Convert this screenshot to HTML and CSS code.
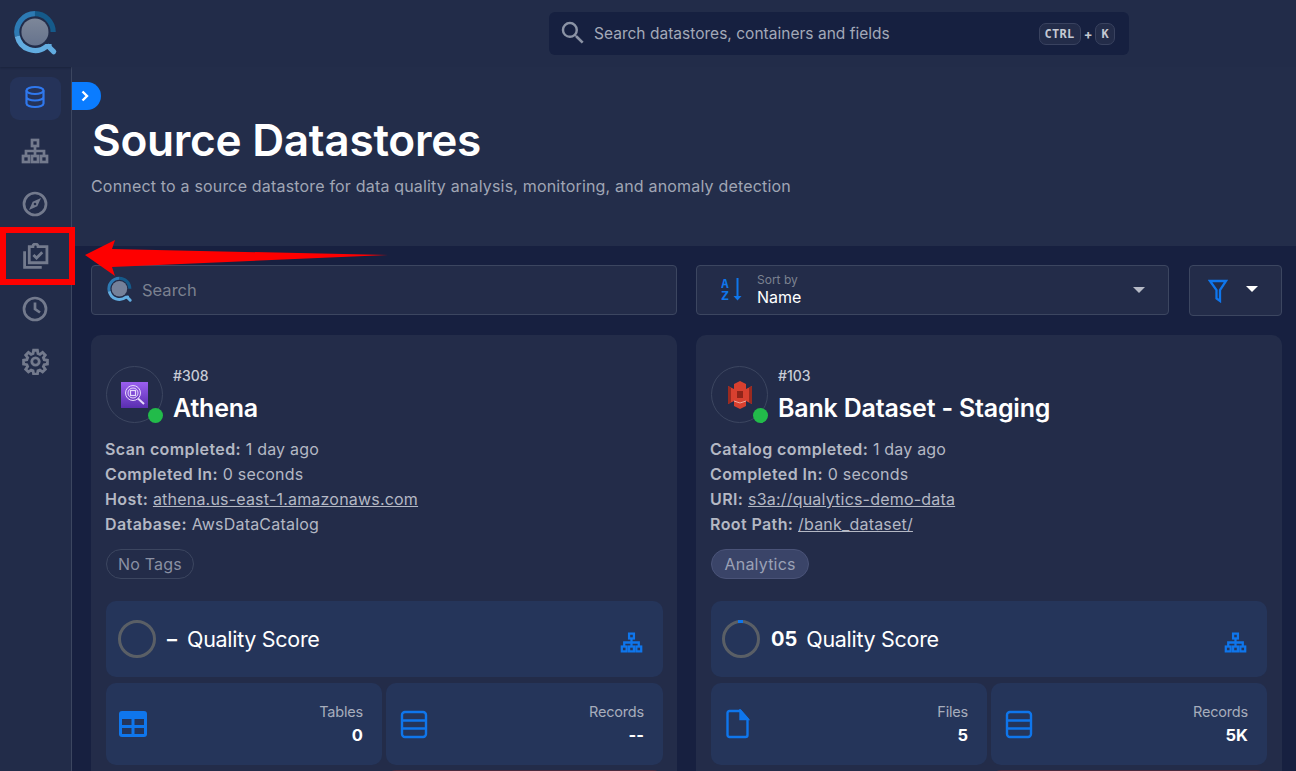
FILE: index.html
```html
<!DOCTYPE html>
<html lang="en">
<head>
    <meta charset="UTF-8">
    <meta name="viewport" content="width=device-width, initial-scale=1.0">
    <title>Source Datastores</title>
    <link rel="stylesheet" href="styles.css">
</head>
<body>
    <header class="topbar">
        <div class="logo-cell">
            <svg width="48" height="52" viewBox="0 0 46 50">
                <defs>
                    <linearGradient id="lens" x1="0" y1="0" x2="0" y2="1">
                        <stop offset="0" stop-color="#7d8799"/>
                        <stop offset="1" stop-color="#66738d"/>
                    </linearGradient>
                </defs>
                <circle cx="22" cy="23" r="13" fill="url(#lens)"/>
                <path d="M22 5.500A17.500 17.500 0 0 1 39.500 23" fill="none" stroke="#155a8a" stroke-width="5"/>
                <path d="M22 5.500A17.500 17.500 0 0 0 5 27" fill="none" stroke="#2d7ab3" stroke-width="5"/>
                <path d="M5 27A17.500 17.500 0 0 0 33 37L38 37" fill="none" stroke="#62ace0" stroke-width="5"/>
                <path d="M35 37L40 42" fill="none" stroke="#62ace0" stroke-width="5" stroke-linecap="round"/>
            </svg>
        </div>
        <div class="global-search">
            <svg class="global-search-icon" width="30" height="30" viewBox="0 0 24 24" fill="#8b93a5"><path d="M15.500 14h-.79l-.28-.27A6.470 6.470 0 0 0 16 9.500 6.500 6.500 0 1 0 9.500 16c1.610 0 3.090-.59 4.230-1.570l.27.28v.79l5 4.990L20.490 19l-4.990-5zm-6 0C7.010 14 5 11.990 5 9.500S7.010 5 9.500 5 14 7.010 14 9.500 11.990 14 9.500 14z"/></svg>
            <span class="global-search-text">Search datastores, containers and fields</span>
            <span class="keys"><kbd>CTRL</kbd><i>+</i><kbd>K</kbd></span>
        </div>
    </header>

    <div class="layout">
        <nav class="sidebar">
            <a class="nav-item active">
                <svg width="24" height="24" viewBox="0 0 24 24" fill="none" stroke="#2f78ee" stroke-width="2.200"><ellipse cx="12" cy="5.500" rx="8.500" ry="3.500"/><path d="M3.500 5.500v13c0 2 3.800 3.500 8.500 3.500s8.500-1.500 8.500-3.500v-13M3.500 12c0 2 3.800 3.500 8.500 3.500s8.500-1.500 8.500-3.500"/></svg>
            </a>
            <a class="nav-item">
                <svg width="28" height="26" viewBox="0 0 28 26" fill="none" stroke="#737a8d" stroke-width="2.700"><rect x="11" y="2" width="6" height="6"/><rect x="2" y="18" width="6" height="6"/><rect x="11" y="18" width="6" height="6"/><rect x="20" y="18" width="6" height="6"/><path d="M14 8v10M5 18v-5h18v5"/></svg>
            </a>
            <a class="nav-item">
                <svg width="26" height="26" viewBox="0 0 26 26" fill="none"><circle cx="13" cy="13" r="11" stroke="#737a8d" stroke-width="2.700"/><path d="M19 7l-3.700 8.300L7 19l3.700-8.300z" fill="#737a8d"/><circle cx="13" cy="13" r="1.300" fill="#222c49"/></svg>
            </a>
            <a class="nav-item">
                <svg width="27" height="27" viewBox="0 0 26 26" fill="none" stroke="#737a8d" stroke-width="2.700"><path d="M2.500 8v15.500H19"/><path d="M7 3.500h3.500a2.500 2.500 0 0 1 5 0H24V19H7z"/><path d="M11 11.500l3 3 5.500-5.500"/></svg>
            </a>
            <a class="nav-item">
                <svg width="26" height="26" viewBox="0 0 26 26" fill="none" stroke="#737a8d" stroke-width="2.700"><circle cx="13" cy="13" r="11"/><path d="M13 6.500V13l5 3.500"/></svg>
            </a>
            <a class="nav-item">
                <svg width="27" height="27" viewBox="0 0 24 24" fill="none" stroke="#737a8d" stroke-width="2.500"><circle cx="12" cy="12" r="3.300"/><path d="M10.300 2h3.400l.5 2.900 1.700.7 2.400-1.700 2.400 2.400-1.700 2.400.7 1.700 2.900.5v3.400l-2.900.5-.7 1.700 1.700 2.400-2.400 2.400-2.400-1.700-1.700.7-.5 2.900h-3.400l-.5-2.900-1.700-.7-2.400 1.700-2.400-2.400 1.700-2.400-.7-1.700-2.900-.5v-3.400l2.900-.5.7-1.700-1.700-2.400 2.400-2.400 2.400 1.700 1.700-.7z"/></svg>
            </a>
        </nav>

        <main class="page">
            <button class="toggle">
                <svg width="12" height="12" viewBox="0 0 12 12" fill="none" stroke="#fff" stroke-width="2.400"><path d="M3.500 1.500L8 6l-4.500 4.500"/></svg>
            </button>
            <section class="page-head">
                <h1>Source Datastores</h1>
                <p>Connect to a source datastore for data quality analysis, monitoring, and anomaly detection</p>
            </section>

            <section class="content">
                <div class="toolbar">
                    <div class="field search-field">
                        <svg width="28" height="30" viewBox="0 0 46 50">
                            <circle cx="22" cy="23" r="13" fill="#75819a"/>
                            <path d="M22 5.500A17.500 17.500 0 0 1 39.500 23" fill="none" stroke="#155a8a" stroke-width="5"/>
                            <path d="M22 5.500A17.500 17.500 0 0 0 5 27" fill="none" stroke="#2d7ab3" stroke-width="5"/>
                            <path d="M5 27A17.500 17.500 0 0 0 33 37L38 37" fill="none" stroke="#62ace0" stroke-width="5"/>
                            <path d="M35 37L40 42" fill="none" stroke="#62ace0" stroke-width="5" stroke-linecap="round"/>
                        </svg>
                        <span>Search</span>
                    </div>
                    <div class="field sort-field">
                        <svg width="24" height="26" viewBox="0 0 24 26">
                            <text x="0" y="10.500" class="az">A</text>
                            <text x="0" y="23" class="az">Z</text>
                            <path d="M16.500 1v21" stroke="#0f76ec" stroke-width="2"/>
                            <path d="M12.500 19h8l-4 4.500z" fill="#0f76ec"/>
                        </svg>
                        <div class="sort-text">
                            <small>Sort by</small>
                            <strong>Name</strong>
                        </div>
                        <span class="caret sort-caret"></span>
                    </div>
                    <div class="field filter-field">
                        <svg width="20" height="24" viewBox="0 0 20 24" fill="none" stroke="#0f76ec" stroke-width="2.300"><path d="M2 2h16l-6 9v11l-3.500-2.500V11z"/></svg>
                        <span class="caret filter-caret"></span>
                    </div>
                </div>

                <div class="cards">
                    <article class="card">
                        <div class="card-head">
                            <div class="avatar">
                                <svg width="27" height="26" viewBox="0 0 27 26">
                                    <defs>
                                        <linearGradient id="athena" x1="0" y1="0" x2="0" y2="1">
                                            <stop offset="0" stop-color="#9a5ff0"/>
                                            <stop offset="1" stop-color="#5a2eb0"/>
                                        </linearGradient>
                                    </defs>
                                    <rect width="27" height="26" fill="url(#athena)"/>
                                    <g fill="none" stroke="#e6d9fb">
                                        <circle cx="12" cy="11" r="7.500" stroke-width="1"/>
                                        <circle cx="12" cy="11" r="5" stroke-width="1"/>
                                        <rect x="9.500" y="8.500" width="5" height="5" stroke-width="1.200"/>
                                        <path d="M17 16.500l6 5.500" stroke-width="2"/>
                                    </g>
                                </svg>
                                <span class="dot"></span>
                            </div>
                            <div class="card-title">
                                <span class="card-id">#308</span>
                                <h2>Athena</h2>
                            </div>
                        </div>
                        <ul class="meta">
                            <li><b>Scan completed:</b> 1 day ago</li>
                            <li><b>Completed In:</b> 0 seconds</li>
                            <li><b>Host:</b> <u>athena.us-east-1.amazonaws.com</u></li>
                            <li><b>Database:</b> AwsDataCatalog</li>
                        </ul>
                        <span class="tag">No Tags</span>
                        <div class="score">
                            <span class="ring"></span>
                            <strong class="score-dash">–</strong>
                            <span class="score-label">Quality Score</span>
                            <svg class="tree" width="23" height="21" viewBox="0 0 28 26" fill="none" stroke="#0f76ec" stroke-width="2.800"><rect x="11" y="2" width="6" height="6"/><rect x="2" y="18" width="6" height="6"/><rect x="11" y="18" width="6" height="6"/><rect x="20" y="18" width="6" height="6"/><path d="M14 8v10M5 18v-5h18v5"/></svg>
                        </div>
                        <div class="stats">
                            <div class="stat">
                                <svg class="icon-table" width="28" height="26" viewBox="0 0 28 26"><rect width="28" height="26" rx="3" fill="#0f76ec"/><rect x="3" y="8" width="9.500" height="6" fill="#25355a"/><rect x="15.500" y="8" width="9.500" height="6" fill="#25355a"/><rect x="3" y="17" width="9.500" height="6" fill="#25355a"/><rect x="15.500" y="17" width="9.500" height="6" fill="#25355a"/></svg>
                                <div class="stat-text"><span>Tables</span><b>0</b></div>
                            </div>
                            <div class="stat">
                                <svg width="28" height="29" viewBox="0 0 28 29" fill="none" stroke="#0f76ec" stroke-width="2.400"><rect x="2" y="2" width="24" height="25" rx="3"/><path d="M2 10.500h24M2 18.500h24"/></svg>
                                <div class="stat-text"><span>Records</span><b>--</b></div>
                            </div>
                        </div>
                        <div class="next-row">
                            <span></span>
                            <span class="next-alert"></span>
                        </div>
                    </article>

                    <article class="card">
                        <div class="card-head">
                            <div class="avatar">
                                <svg width="24" height="28" viewBox="0 0 24 28">
                                    <path d="M0 5l6 3V3l6-3 6 3v5l6-3v18l-6-3v5l-6 3-6-3v-5l-6 3z" fill="#d8402f"/>
                                    <path d="M0 5l3 1.500v15L0 23zM24 5l-3 1.500v15l3 1.500z" fill="#9a2a20"/>
                                    <rect x="9" y="10" width="6" height="7" fill="#8f2419"/>
                                    <path d="M6 20l6 2 6-2" fill="none" stroke="#f0a79d" stroke-width="1"/>
                                </svg>
                                <span class="dot"></span>
                            </div>
                            <div class="card-title">
                                <span class="card-id">#103</span>
                                <h2>Bank Dataset - Staging</h2>
                            </div>
                        </div>
                        <ul class="meta">
                            <li><b>Catalog completed:</b> 1 day ago</li>
                            <li><b>Completed In:</b> 0 seconds</li>
                            <li><b>URI:</b> <u>s3a://qualytics-demo-data</u></li>
                            <li><b>Root Path:</b> <u>/bank_dataset/</u></li>
                        </ul>
                        <span class="tag tag-filled">Analytics</span>
                        <div class="score">
                            <span class="ring ring-low"></span>
                            <strong class="score-num">05</strong>
                            <span class="score-label">Quality Score</span>
                            <svg class="tree" width="23" height="21" viewBox="0 0 28 26" fill="none" stroke="#0f76ec" stroke-width="2.800"><rect x="11" y="2" width="6" height="6"/><rect x="2" y="18" width="6" height="6"/><rect x="11" y="18" width="6" height="6"/><rect x="20" y="18" width="6" height="6"/><path d="M14 8v10M5 18v-5h18v5"/></svg>
                        </div>
                        <div class="stats">
                            <div class="stat">
                                <svg class="icon-file" width="25" height="30" viewBox="0 0 24 30" fill="none" stroke="#0f76ec" stroke-width="2.400"><path d="M2 4a2 2 0 0 1 2-2h11l7 8v16a2 2 0 0 1-2 2H4a2 2 0 0 1-2-2z"/><path d="M15 2v8h7z" fill="#0f76ec"/></svg>
                                <div class="stat-text"><span>Files</span><b>5</b></div>
                            </div>
                            <div class="stat">
                                <svg width="28" height="29" viewBox="0 0 28 29" fill="none" stroke="#0f76ec" stroke-width="2.400"><rect x="2" y="2" width="24" height="25" rx="3"/><path d="M2 10.500h24M2 18.500h24"/></svg>
                                <div class="stat-text"><span>Records</span><b>5K</b></div>
                            </div>
                        </div>
                        <div class="next-row">
                            <span></span>
                            <span class="next-alert"></span>
                        </div>
                    </article>
                </div>
            </section>
        </main>
    </div>

    <!-- red callout pointing at the sidebar item -->
    <div class="callout-box"></div>
    <svg class="callout-arrow" width="305" height="40" viewBox="0 0 305 40">
        <path d="M0 15L30 0L27 9L303 15L27 27L30 36z" fill="#fe0000"/>
    </svg>
</body>
</html>
```

FILE: styles.css
```css
* {
    margin: 0;
    padding: 0;
    box-sizing: border-box;
}

body {
    font-family: 'Inter', 'Noto Sans', sans-serif;
    background-color: #222c49;
    color: #ffffff;
    width: 1296px;
    height: 771px;
    overflow: hidden;
    position: relative;
}

.topbar {
    height: 67px;
    display: flex;
    align-items: center;
    background-color: #222c49;
    box-shadow: 0 1px 2px rgba(10, 16, 36, 0.35);
    position: relative;
}

.logo-cell {
    width: 72px;
    display: flex;
    justify-content: center;
}

.logo-cell svg {
    margin-left: -1px;
}

.global-search {
    margin-left: 477px;
    width: 580px;
    height: 43px;
    background-color: #162040;
    border-radius: 6px;
    display: flex;
    align-items: center;
    padding: 0 9px;
}

.global-search-icon {
    flex: none;
    margin-right: 6px;
    margin-top: -2px;
}

.global-search-text {
    font-size: 15.500px;
    letter-spacing: 0.02px;
    color: #a3a9b8;
    margin-top: -1px;
}

.keys {
    margin-left: auto;
    margin-right: 5px;
    display: flex;
    align-items: center;
    gap: 3px;
    font-size: 13px;
    font-weight: 700;
    color: #c4c8d2;
}

.keys i {
    font-style: normal;
}

kbd {
    font-family: 'DejaVu Sans Mono', monospace;
    font-size: 12px;
    font-weight: 700;
    letter-spacing: 0.3px;
    height: 22px;
    line-height: 20px;
    padding: 0 5px;
    border: 1px solid #39425f;
    border-radius: 7px;
    background-color: #232c49;
}

.layout {
    display: flex;
    height: 704px;
}

.sidebar {
    width: 72px;
    flex: none;
    border-right: 1px solid #3c4660;
    display: flex;
    flex-direction: column;
    align-items: center;
    padding-top: 10px;
    padding-right: 1px;
    background-color: #222c49;
}

.nav-item {
    width: 51px;
    height: 43px;
    border-radius: 9px;
    display: flex;
    align-items: center;
    justify-content: center;
    margin-bottom: 9.500px;
}

.nav-item.active {
    background-color: #253359;
    padding-bottom: 4px;
}

.page {
    flex: 1;
    min-width: 0;
    position: relative;
}

.toggle {
    position: absolute;
    left: 0;
    top: 15px;
    width: 29px;
    height: 28px;
    border: none;
    border-radius: 0 14px 14px 0;
    background-color: #0a7cff;
    display: flex;
    align-items: center;
    justify-content: center;
    padding-right: 4px;
}

.page-head {
    height: 179px;
    padding: 46px 0 0 20px;
    background-color: #232d4a;
}

h1 {
    font-size: 44.200px;
    line-height: 54px;
    font-weight: 600;
    letter-spacing: -0.3px;
}

.page-head p {
    margin-top: 9px;
    margin-left: -1px;
    font-size: 16px;
    line-height: 20px;
    letter-spacing: 0.18px;
    color: #a0a6b5;
}

.content {
    height: 525px;
    padding: 19px 14px 0 19px;
    background-color: #172040;
    overflow: hidden;
}

.toolbar {
    display: grid;
    grid-template-columns: 586px 473px 93px;
    column-gap: 19px;
    height: 51px;
    align-items: start;
}

.field {
    height: 50px;
    border: 1px solid #3c4660;
    border-radius: 4px;
    background-color: #232c49;
    display: flex;
    align-items: center;
}

.search-field {
    padding-left: 14px;
    gap: 8px;
    font-size: 16.500px;
    color: #7b8190;
}

.sort-field {
    padding-left: 24px;
}

.az {
    font-family: 'DejaVu Sans Mono', monospace;
    font-size: 13px;
    font-weight: 700;
    fill: #0f76ec;
}

.sort-text {
    margin-left: 12px;
    display: flex;
    flex-direction: column;
}

.sort-text small {
    font-size: 12px;
    line-height: 14px;
    color: #7b8190;
}

.sort-text strong {
    font-size: 16px;
    line-height: 21px;
    font-weight: 400;
}

.caret {
    width: 0;
    height: 0;
    border-left: 6px solid transparent;
    border-right: 6px solid transparent;
    border-top: 6px solid #b6bac6;
}

.sort-caret {
    margin-left: auto;
    margin-right: 23px;
}

.filter-field {
    height: 51px;
    padding-left: 18px;
    margin-left: 1px;
    margin-right: -1px;
}

.filter-caret {
    margin-left: 18px;
    margin-top: -3px;
    border-top-color: #ffffff;
}

.cards {
    display: grid;
    grid-template-columns: 586px 586px;
    column-gap: 19px;
    margin-top: 19px;
}

.card {
    height: 500px;
    background-color: #232c49;
    border-radius: 10px;
    padding: 31px 14px 0 15px;
}

.card + .card {
    padding-right: 15px;
}

.card-head {
    display: flex;
    gap: 10px;
    height: 57px;
}

.avatar {
    width: 57px;
    height: 57px;
    flex: none;
    border: 1px solid #3c4660;
    border-radius: 50%;
    display: flex;
    align-items: center;
    justify-content: center;
    position: relative;
}

.dot {
    position: absolute;
    right: -1px;
    bottom: -1px;
    width: 15px;
    height: 15px;
    border-radius: 50%;
    background-color: #22bb4a;
}

.card-id {
    display: block;
    font-size: 14px;
    line-height: 20px;
    font-weight: 500;
    color: #c9ccd6;
}

h2 {
    margin-top: 7px;
    font-size: 25px;
    line-height: 30px;
    font-weight: 600;
    letter-spacing: -0.2px;
}

.meta {
    list-style: none;
    margin-top: 14px;
    margin-left: -1px;
    font-size: 16px;
    line-height: 25px;
    letter-spacing: 0.2px;
    color: #b4b8c4;
}

.meta b {
    font-weight: 600;
    letter-spacing: 0.4px;
}

.tag {
    display: inline-block;
    margin-top: 12px;
    height: 30px;
    line-height: 28px;
    padding: 0 11px;
    border: 1px solid #3c4660;
    border-radius: 15px;
    font-size: 16px;
    letter-spacing: 0.2px;
    color: #8a90a3;
}

.tag-filled {
    padding: 0 12.500px;
    background-color: #3a4468;
    border-color: #4a5378;
    color: #9aa1b6;
}

.score {
    margin-top: 22px;
    height: 76px;
    border-radius: 10px;
    background-color: #25355a;
    display: flex;
    align-items: center;
    padding: 0 20px 0 12px;
}

.ring {
    width: 38px;
    height: 38px;
    border: 3.500px solid #5a5f66;
    border-radius: 50%;
    margin-right: 11px;
    flex: none;
    position: relative;
}

.ring-low {
    margin-left: -1px;
}

.ring-low::after {
    content: '';
    position: absolute;
    left: 13px;
    top: -3.500px;
    width: 5px;
    height: 3.500px;
    background-color: #0f76ec;
}

.score-dash,
.score-num {
    font-size: 20px;
    font-weight: 700;
    margin-right: 9px;
}

.score-dash {
    margin-right: 10px;
}

.score-label {
    font-size: 21.500px;
    letter-spacing: -0.3px;
}

.tree {
    margin-left: auto;
    margin-top: 6px;
}

.stats {
    margin-top: 6px;
    display: grid;
    grid-template-columns: 276px 1fr;
    column-gap: 4px;
}

.stat {
    height: 82px;
    border-radius: 10px;
    background-color: #25355a;
    display: flex;
    align-items: center;
    padding: 0 19px 0 13px;
}

.stat + .stat {
    padding-left: 14px;
}

.icon-file {
    margin-left: 1px;
}

.stat-text {
    margin-left: auto;
    display: flex;
    flex-direction: column;
    align-items: flex-end;
}

.stat-text span {
    font-size: 14.500px;
    line-height: 20px;
    letter-spacing: -0.2px;
    color: #a7adbc;
}

.stat-text b {
    margin-top: 2px;
    font-size: 16.500px;
    line-height: 22px;
    font-weight: 700;
}

.next-row {
    margin-top: 5px;
    display: grid;
    grid-template-columns: 276px 1fr;
    column-gap: 4px;
}

.next-row span {
    height: 40px;
}

.next-row .next-alert {
    border-radius: 10px 10px 0 0;
    background-color: #4a2a3e;
}

.callout-box {
    position: absolute;
    left: 0;
    top: 227px;
    width: 75px;
    height: 58px;
    border: 6px solid #fe0000;
}

.callout-arrow {
    position: absolute;
    left: 85px;
    top: 240px;
}
```
